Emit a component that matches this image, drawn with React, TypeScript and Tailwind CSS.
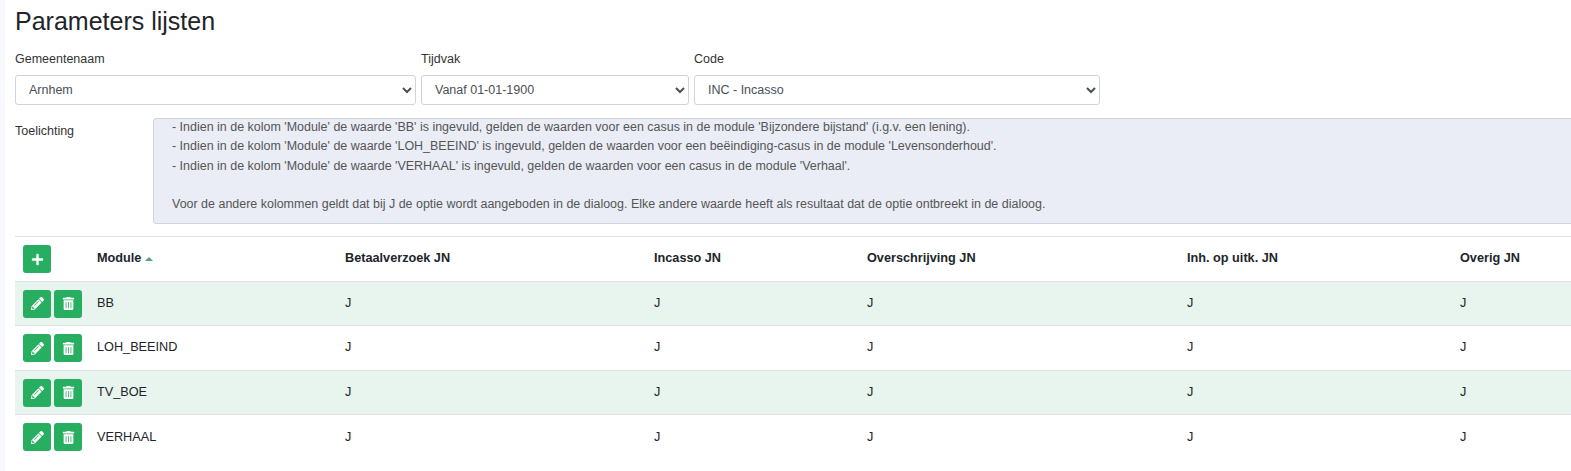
import { FaPlus, FaPencilAlt, FaTrashAlt } from 'react-icons/fa';

const COLUMNS = ['Betaalverzoek JN', 'Incasso JN', 'Overschrijving JN', 'Inh. op uitk. JN', 'Overig JN'];
const ROWS = ['BB', 'LOH_BEEIND', 'TV_BOE', 'VERHAAL'];

const FILTERS = [
  { label: 'Gemeentenaam', value: 'Arnhem', width: 'w-[401px]' },
  { label: 'Tijdvak', value: 'Vanaf 01-01-1900', width: 'w-[268px]' },
  { label: 'Code', value: 'INC - Incasso', width: 'w-[406px]' },
];

function IconButton({ children }: { children: React.ReactNode }) {
  return (
    <button className="w-[28px] h-[28px] rounded-[3px] bg-[#27ae60] text-white flex items-center justify-center text-[13px]">
      {children}
    </button>
  );
}

export default function App() {
  return (
    <div className="w-[1571px] h-[471px] overflow-hidden bg-white text-[#212529] font-['Liberation_Sans',Arial,sans-serif] text-[12.5px] flex">
      <div className="w-[5px] shrink-0 bg-[#f8f9fc]" />
      <div className="w-[1600px] shrink-0 pl-[10px]">
        <h1 className="text-[25px] leading-[29px] pt-[7px] text-[#212529]">Parameters lijsten</h1>

        <div className="flex gap-[5px] mt-[16px]">
          {FILTERS.map((f) => (
            <div key={f.label} className={f.width}>
              <label className="block leading-[15px] mb-[8px] text-[#333]">{f.label}</label>
              <select className={`${f.width} h-[30px] border border-[#ced4da] rounded-[3px] pl-[9px] pr-[3px] text-[#495057] bg-white`}>
                <option>{f.value}</option>
              </select>
            </div>
          ))}
        </div>

        <div className="flex mt-[13px]">
          <div className="w-[138px] shrink-0 pt-[6px] leading-[15px] text-[#333]">Toelichting</div>
          <div className="flex-1 h-[106px] overflow-hidden bg-[#eaedf5] border border-[#ced4da] rounded-[3px] px-[18px] text-[#555] text-[12.47px] leading-[19.4px]">
            <div className="-mt-[1px]">
              <p>- Indien in de kolom 'Module' de waarde 'BB' is ingevuld, gelden de waarden voor een casus in de module 'Bijzondere bijstand' (i.g.v. een lening).</p>
              <p>- Indien in de kolom 'Module' de waarde 'LOH_BEEIND' is ingevuld, gelden de waarden voor een beëindiging-casus in de module 'Levensonderhoud'.</p>
              <p>- Indien in de kolom 'Module' de waarde 'VERHAAL' is ingevuld, gelden de waarden voor een casus in de module 'Verhaal'.</p>
              <p className="mt-[19px]">Voor de andere kolommen geldt dat bij J de optie wordt aangeboden in de dialoog. Elke andere waarde heeft als resultaat dat de optie ontbreekt in de dialoog.</p>
            </div>
          </div>
        </div>

        <table className="mt-[12px] table-fixed w-[1590px] border-collapse border-t border-[#dee2e6] text-[12.7px]">
          <colgroup>
            <col className="w-[74px]" />
            <col className="w-[248px]" />
            <col className="w-[309px]" />
            <col className="w-[213px]" />
            <col className="w-[320px]" />
            <col className="w-[273px]" />
            <col />
          </colgroup>
          <thead>
            <tr className="h-[45px] border-b border-[#dee2e6]">
              <th className="pl-[8px] text-left font-normal">
                <IconButton>
                  <FaPlus />
                </IconButton>
              </th>
              <th className="pl-[8px] text-left font-bold">
                <span className="inline-flex items-center gap-[4px]">
                  Module
                  <span className="w-0 h-0 border-x-[4px] border-x-transparent border-b-[4px] border-b-[#55a57c]" />
                </span>
              </th>
              {COLUMNS.map((c) => (
                <th key={c} className="pl-[8px] text-left font-bold">{c}</th>
              ))}
              <th />
            </tr>
          </thead>
          <tbody>
            {ROWS.map((row, i) => (
              <tr
                key={row}
                className={`${i % 2 === 0 ? 'h-[44px] bg-[#e8f5ee]' : 'h-[45px] bg-white'} ${i < ROWS.length - 1 ? 'border-b border-[#dee2e6]' : ''}`}
              >
                <td className="pl-[8px]">
                  <div className="flex gap-[3px]">
                    <IconButton>
                      <FaPencilAlt />
                    </IconButton>
                    <IconButton>
                      <FaTrashAlt />
                    </IconButton>
                  </div>
                </td>
                <td className="pl-[8px]">{row}</td>
                {COLUMNS.map((c) => (
                  <td key={c} className="pl-[8px]">J</td>
                ))}
                <td />
              </tr>
            ))}
          </tbody>
        </table>
      </div>
    </div>
  );
}
